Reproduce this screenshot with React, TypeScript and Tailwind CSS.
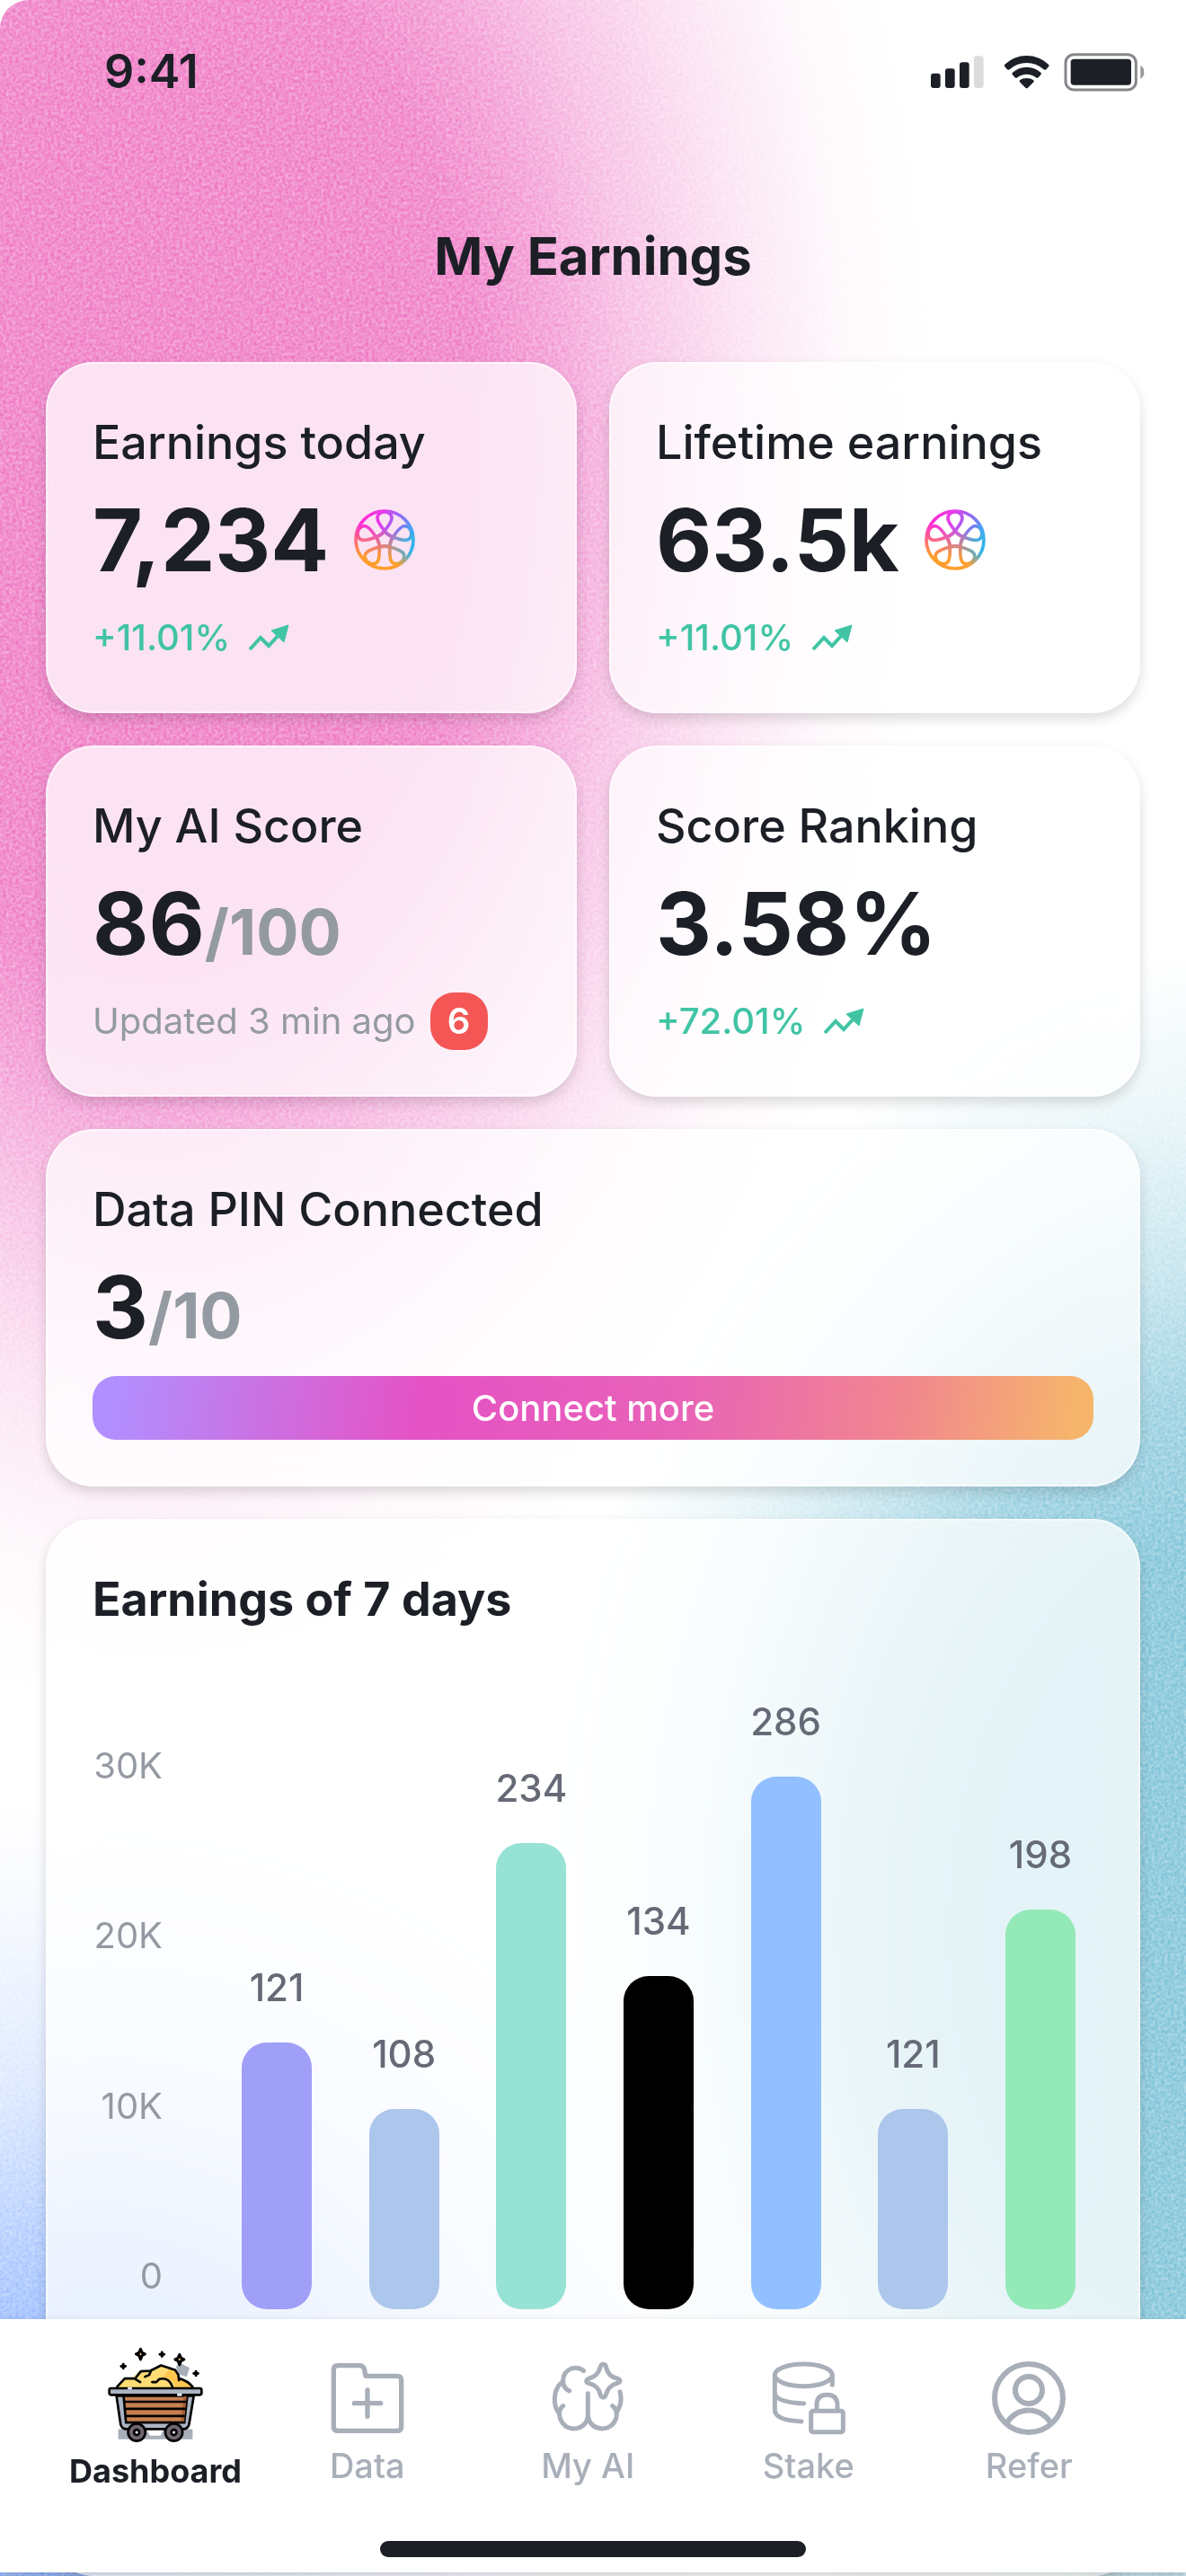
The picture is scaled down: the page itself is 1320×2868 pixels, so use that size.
import type { ReactNode } from "react";

const days = [
  { value: 121, bar: "h-[297px] bg-[#9f9ff8]" },
  { value: 108, bar: "h-[223px] bg-[#adc6ec]" },
  { value: 234, bar: "h-[519px] bg-[#96e3d5]" },
  { value: 134, bar: "h-[371px] bg-black" },
  { value: 286, bar: "h-[593px] bg-[#92bfff]" },
  { value: 121, bar: "h-[223px] bg-[#adc6ec]" },
  { value: 198, bar: "h-[445px] bg-[#94e9b8]" },
];

const ticks = ["30K", "20K", "10K", "0"];

const Backdrop = () => (
  <svg
    className="absolute inset-0 h-full w-full"
    viewBox="0 0 1320 2868"
    preserveAspectRatio="none"
    aria-hidden="true"
  >
    <defs>
      <radialGradient id="pink">
        <stop offset="0.3" stopColor="#ed6cbe" stopOpacity="0.97" />
        <stop offset="0.42" stopColor="#ed6cbe" stopOpacity="0.94" />
        <stop offset="0.52" stopColor="#ee74c4" stopOpacity="0.78" />
        <stop offset="0.62" stopColor="#ef7cc8" stopOpacity="0.54" />
        <stop offset="0.75" stopColor="#ef7cc8" stopOpacity="0.26" />
        <stop offset="0.88" stopColor="#ef7cc8" stopOpacity="0.07" />
        <stop offset="1" stopColor="#ef7cc8" stopOpacity="0" />
      </radialGradient>
      <radialGradient id="teal">
        <stop offset="0.4" stopColor="#68b9d2" stopOpacity="0.9" />
        <stop offset="0.55" stopColor="#6cbbd3" stopOpacity="0.75" />
        <stop offset="0.7" stopColor="#74c0d6" stopOpacity="0.43" />
        <stop offset="0.85" stopColor="#80c8dc" stopOpacity="0.18" />
        <stop offset="1" stopColor="#80c8dc" stopOpacity="0" />
      </radialGradient>
      <radialGradient id="blue">
        <stop offset="0.1" stopColor="#7ba8ff" />
        <stop offset="0.3" stopColor="#7ba8ff" stopOpacity="0.8" />
        <stop offset="0.6" stopColor="#7ba8ff" stopOpacity="0.3" />
        <stop offset="0.85" stopColor="#7ba8ff" stopOpacity="0.08" />
        <stop offset="1" stopColor="#7ba8ff" stopOpacity="0" />
      </radialGradient>
      <filter
        id="grain"
        x="0"
        y="0"
        width="1320"
        height="2868"
        filterUnits="userSpaceOnUse"
        colorInterpolationFilters="sRGB"
      >
        <feTurbulence type="fractalNoise" baseFrequency="0.28" numOctaves="2" seed="4" />
        <feColorMatrix values="0 0 0 0 1  0 0 0 0 1  0 0 0 0 1  1 0 0 0 0" result="noise" />
        <feComposite in="SourceGraphic" in2="noise" operator="arithmetic" k1="0.64" k2="0.46" k3="0" k4="0" />
      </filter>
    </defs>
    <g filter="url(#grain)">
      <ellipse cx="170" cy="500" rx="870" ry="1400" fill="url(#pink)" />
      <ellipse cx="1400" cy="2150" rx="800" ry="1100" fill="url(#teal)" />
      <ellipse cx="100" cy="2800" rx="800" ry="800" fill="url(#blue)" />
    </g>
  </svg>
);

const StatusIcons = () => (
  <svg className="h-[43px] w-[238px]" viewBox="108 60 714 129" aria-hidden="true">
    <g fill="#1c1f26">
      <rect x="108" y="128" width="32" height="49" rx="9" />
      <rect x="156" y="112" width="32" height="65" rx="9" />
      <rect x="204" y="91" width="32" height="86" rx="9" />
      <rect x="252" y="70" width="32" height="107" rx="9" fill="#dcdcdc" />
      <path d="M355 98Q351 102 355 106L363 115Q367 118 371 115Q396 93 428 93T485 115Q489 118 493 115L501 106Q505 102 501 98Q470 69 428 69T355 98Z" />
      <path d="M381 125Q377 129 381 133L389 142Q393 145 397 142Q410 131 428 131T459 142Q463 145 467 142L475 133Q479 129 475 125Q455 107 428 107T381 125Z" />
      <path d="M405 151Q402 155 406 158L424 176Q428 179 432 176L450 158Q454 155 451 151Q442 144 428 144T405 151Z" />
      <rect x="575" y="80" width="202" height="87" rx="11" />
    </g>
    <rect x="558" y="65" width="235" height="118" rx="28" fill="none" stroke="#86868b" strokeWidth="9" />
    <path d="M808 102Q820 108 820 124T808 146Z" fill="#97979b" />
  </svg>
);

const loop =
  "M117 146C130 142 140 133 146 125C158 110 170 95 170 82C170 70 158 62 146 62C134 62 122 70 122 82C122 95 134 110 146 125C152 133 162 142 175 146";

const TokenIcon = ({ id }: { id: string }) => (
  <svg className="h-[68px] w-[68px]" viewBox="44 53 204 204" aria-hidden="true">
    <defs>
      <linearGradient id={id + "h"} gradientUnits="userSpaceOnUse" x1="70" y1="110" x2="235" y2="165">
        <stop offset="0" stopColor="#ff2fd6" />
        <stop offset="0.3" stopColor="#e63cec" />
        <stop offset="0.6" stopColor="#9a66f6" />
        <stop offset="1" stopColor="#3fa8f2" />
      </linearGradient>
      <linearGradient id={id + "v"} gradientUnits="userSpaceOnUse" x1="120" y1="110" x2="105" y2="215">
        <stop offset="0" stopColor="#ff9e2c" stopOpacity="0" />
        <stop offset="1" stopColor="#ff9e2c" />
      </linearGradient>
      <radialGradient id={id + "c"} gradientUnits="userSpaceOnUse" cx="250" cy="180" r="85">
        <stop offset="0" stopColor="#2fb4f0" />
        <stop offset="0.3" stopColor="#2fb4f0" stopOpacity="0.9" />
        <stop offset="1" stopColor="#2fb4f0" stopOpacity="0" />
      </radialGradient>
      <mask id={id + "m"} maskUnits="userSpaceOnUse" x="44" y="53" width="204" height="204">
        <g fill="none" stroke="#fff" strokeWidth="11">
          <circle cx="146" cy="155" r="96" />
          <path d={loop} />
          <path d={loop} transform="rotate(72 146 155)" />
          <path d={loop} transform="rotate(144 146 155)" />
          <path d={loop} transform="rotate(216 146 155)" />
          <path d={loop} transform="rotate(288 146 155)" />
        </g>
      </mask>
    </defs>
    <g mask={"url(#" + id + "m)"}>
      <rect x="44" y="53" width="204" height="204" fill={"url(#" + id + "h)"} />
      <rect x="44" y="53" width="204" height="204" fill={"url(#" + id + "v)"} />
      <rect x="44" y="53" width="204" height="204" fill={"url(#" + id + "c)"} />
    </g>
  </svg>
);

const TrendIcon = () => (
  <svg className="h-[30px] w-[46px]" viewBox="0 0 46 30" aria-hidden="true">
    <path d="M2 28L14 15L23 24L36 10" fill="none" stroke="#40c4a4" strokeWidth="4" />
    <path d="M45 1L26 7L40 20Z" fill="#40c4a4" stroke="#40c4a4" strokeLinejoin="round" />
  </svg>
);

const CartIcon = () => (
  <svg className="h-[106px] w-[106px]" viewBox="24 24 318 320" aria-hidden="true">
    <path d="M262 76L298 94L288 124L262 116L252 92ZM58 300H308V334H58Z" fill="#a9afb9" />
    <path d="M154 302H210L200 322H164Z" fill="#fff" />
    <path d="M52 162L80 130H104L130 104L168 102L202 86L250 104L264 130Q292 140 308 162Z" fill="#ffdd74" />
    <path d="M206 130Q250 128 246 162H308Q292 140 264 130L250 104L228 98Z" fill="#ffc74f" />
    <g fill="none" stroke="#000" strokeWidth="8" strokeLinecap="round" strokeLinejoin="round">
      <path d="M54 158L80 130H112L132 142M118 126L134 106L166 104L202 86L250 102L260 118L262 136M168 104L162 118L148 124M264 130Q292 138 308 158M172 142H186L196 132Q228 124 240 158" />
    </g>
    <path d="M52 188H312L296 284Q292 300 276 300H86Q70 300 66 284Z" fill="#abb5c3" stroke="#000" strokeWidth="8" />
    <path d="M76 188H290L280 278H84Z" fill="#c67f4e" stroke="#000" strokeWidth="8" />
    <path d="M278 190H288L280 274H268Z" fill="#a65f36" />
    <path d="M78 208H288M80 232H285M82 256H282" stroke="#000" strokeWidth="8" />
    <rect x="28" y="163" width="310" height="22" rx="6" fill="#abb5c3" stroke="#000" strokeWidth="8" />
    <path d="M90 163H104" stroke="#e6edf5" strokeWidth="8" />
    <path d="M256 185H272" stroke="#e6edf5" strokeWidth="8" />
    <g fill="#6f6672" stroke="#000" strokeWidth="8">
      <circle cx="120" cy="311" r="29" />
      <circle cx="245" cy="311" r="29" />
      <circle cx="120" cy="311" r="9" fill="#d8dde6" />
      <circle cx="245" cy="311" r="9" fill="#d8dde6" />
    </g>
    <g fill="#ffdd74" stroke="#000" strokeWidth="9" strokeLinejoin="round">
      <path d="M133 31L138 43L148 48L138 53L133 66L128 53L118 48L128 43Z" />
      <path d="M264 49L269 61L279 66L269 71L264 84L259 71L249 66L259 61Z" />
    </g>
    <path
      d="M205 42V56M198 49H212M75 82V96M68 89H82M319 106V120M312 113H326"
      stroke="#000"
      strokeWidth="9"
      strokeLinecap="round"
    />
  </svg>
);

const FolderIcon = () => (
  <svg
    className="h-[84px] w-[84px]"
    viewBox="916 147 252 252"
    fill="none"
    stroke="#a9afb9"
    strokeWidth="16"
    strokeLinecap="round"
    strokeLinejoin="round"
    aria-hidden="true"
  >
    <path d="M1015 161H943Q929 161 929 175V365Q929 379 943 379H1141Q1155 379 1155 365V210Q1155 196 1141 196H1036L1031 172Q1028 161 1015 161Z" />
    <path d="M998 287H1086M1042 243V331" />
  </svg>
);

const BrainIcon = () => (
  <svg
    className="h-[84px] w-[84px]"
    viewBox="32 27 252 252"
    fill="none"
    stroke="#a9afb9"
    strokeWidth="15"
    strokeLinecap="round"
    strokeLinejoin="round"
    aria-hidden="true"
  >
    <path d="M145 59Q128 44 104 51Q76 62 76 92Q76 116 97 126" />
    <path d="M72 97Q48 118 48 154Q48 182 61 198M76 176Q58 188 66 218Q80 252 112 252Q152 250 159 212V134" />
    <path d="M159 212Q168 250 206 252Q244 250 254 214Q258 188 241 176M256 196Q276 162 266 129" />
    <path d="M210 37Q218 37 220 47Q226 77 256 84Q266 87 266 92T256 100Q227 109 220 136Q217 147 210 147T200 136Q194 109 164 101Q154 98 154 93T164 84Q193 76 200 47Q203 37 210 37Z" />
  </svg>
);

const StakeIcon = () => (
  <svg
    className="h-[84px] w-[84px]"
    viewBox="770 27 252 252"
    fill="none"
    stroke="#a9afb9"
    strokeWidth="15"
    strokeLinecap="round"
    aria-hidden="true"
  >
    <ellipse cx="879" cy="73" rx="96" ry="37" />
    <path d="M783 73V190Q783 224 872 228M783 134Q788 164 880 168M975 73V106" />
    <path d="M923 188V172Q923 139 957 139T992 172V188" />
    <rect x="904" y="193" width="107" height="70" rx="6" strokeLinejoin="round" />
  </svg>
);

const ReferIcon = () => (
  <svg
    className="h-[84px] w-[84px]"
    viewBox="0 0 84 84"
    fill="none"
    stroke="#a9afb9"
    strokeWidth="6"
    aria-hidden="true"
  >
    <circle cx="42" cy="41" r="38" />
    <circle cx="42" cy="32" r="15" />
    <path d="M18 68A28 28 0 0 1 66 68" />
  </svg>
);

const Card = ({ children, className = "" }: { children: ReactNode; className?: string }) => (
  <section
    className={
      "rounded-[54px] bg-white/75 px-[52px] pt-[52px] shadow-[inset_0_0_0_2px_rgba(255,255,255,0.5),0_6px_14px_rgba(0,0,0,0.14)] backdrop-blur-xl " +
      (className || "pb-[52px]")
    }
  >
    {children}
  </section>
);

const CardTitle = ({ children }: { children: ReactNode }) => (
  <h2 className="text-[52px] leading-[76px] font-medium whitespace-nowrap">{children}</h2>
);

const Figure = ({ children, of }: { children: ReactNode; of?: string }) => (
  <p className="flex h-[140px] items-baseline text-[96px] leading-[140px] font-bold">
    {children}
    {of && <span className="text-[70px] text-[#949aa1]">{of}</span>}
  </p>
);

const Trend = ({ children }: { children: ReactNode }) => (
  <p className="mt-[7px] flex h-16 items-center gap-5 text-[40px] font-medium text-[#40c4a4]">
    {children}
    <TrendIcon />
  </p>
);

const Tab = ({ icon, label }: { icon: ReactNode; label: string }) => (
  <a href="#" className="flex flex-1 flex-col items-center gap-2 pt-4 font-medium text-[#a9afb9]">
    {icon}
    {label}
  </a>
);

const App = () => {
  return (
    <div className="relative isolate min-h-screen overflow-hidden rounded-t-[32px] bg-white font-['Inter',sans-serif] text-[#1c1f26]">
      <Backdrop />

      <div className="relative">
        <header>
          <div className="flex items-center justify-between pt-11 pr-[46px] pl-[116px]">
            <time className="text-[52px] leading-[72px] font-semibold">9:41</time>
            <StatusIcons />
          </div>
          <h1 className="mt-[131px] text-center text-[58px] leading-[76px] font-bold">My Earnings</h1>
        </header>

        <main className="mt-20 flex flex-col gap-9 px-[51px]">
          <div className="grid grid-cols-2 gap-9">
            <Card>
              <CardTitle>Earnings today</CardTitle>
              <div className="flex items-center gap-7">
                <Figure>7,234</Figure>
                <TokenIcon id="today" />
              </div>
              <Trend>+11.01%</Trend>
            </Card>
            <Card>
              <CardTitle>Lifetime earnings</CardTitle>
              <div className="flex items-center gap-7">
                <Figure>63.5k</Figure>
                <TokenIcon id="lifetime" />
              </div>
              <Trend>+11.01%</Trend>
            </Card>
            <Card>
              <CardTitle>My AI Score</CardTitle>
              <Figure of="/100">86</Figure>
              <p className="mt-[7px] flex h-16 items-center gap-4 text-[40px] whitespace-nowrap text-[#949aa1]">
                Updated 3 min ago
                <span className="flex h-16 w-16 items-center justify-center rounded-[26px] bg-[#f45656] font-semibold text-white">
                  6
                </span>
              </p>
            </Card>
            <Card>
              <CardTitle>Score Ranking</CardTitle>
              <Figure>3.58%</Figure>
              <Trend>+72.01%</Trend>
            </Card>
          </div>

          <Card>
            <CardTitle>Data PIN Connected</CardTitle>
            <Figure of="/10">3</Figure>
            <button
              type="button"
              className="mt-[7px] h-[71px] w-full rounded-[26px] bg-[linear-gradient(98deg,#b18fff_2%,#e552c5_33%,#e862b8_58%,#f18590_80%,#f6b56b_98%)] text-[40px] font-medium text-white"
            >
              Connect more
            </button>
          </Card>

          <Card className="pb-[297px]">
            <h2 className="text-[52px] leading-[76px] font-bold">Earnings of 7 days</h2>
            <div className="mt-[66px] flex h-[686px] pr-5">
              <div className="flex w-[78px] flex-col justify-between pt-[56px] pb-3 text-right text-[40px] leading-[50px] text-[#9499a3]">
                {ticks.map((tick) => (
                  <span key={tick}>{tick}</span>
                ))}
              </div>
              <ul className="ml-[88px] flex flex-1 items-end justify-between">
                {days.map((day, i) => (
                  <li
                    key={i}
                    className="flex w-[78px] flex-col items-center gap-9 text-[42px] leading-[50px] font-medium text-[#666a76]"
                  >
                    {day.value}
                    <span className={"w-full rounded-[28px] " + day.bar} />
                  </li>
                ))}
              </ul>
            </div>
          </Card>
        </main>
      </div>

      <nav className="fixed inset-x-0 bottom-1 h-[282px] bg-white pt-[31px] shadow-[0_4px_10px_rgba(0,0,0,0.2)]">
        <div className="flex gap-[34px] pr-[69px] pl-[77px] text-[38px] leading-[48px]">
          <a
            href="#"
            aria-current="page"
            className="flex w-48 flex-col items-center gap-2 text-[36px] font-bold"
          >
            <CartIcon />
            Dashboard
          </a>
          <Tab icon={<FolderIcon />} label="Data" />
          <Tab icon={<BrainIcon />} label="My AI" />
          <Tab icon={<StakeIcon />} label="Stake" />
          <Tab icon={<ReferIcon />} label="Refer" />
        </div>
        <div className="mx-auto mt-[54px] h-[18px] w-[474px] rounded-full bg-[#1c1f26]" />
      </nav>
    </div>
  );
};

export default App;
